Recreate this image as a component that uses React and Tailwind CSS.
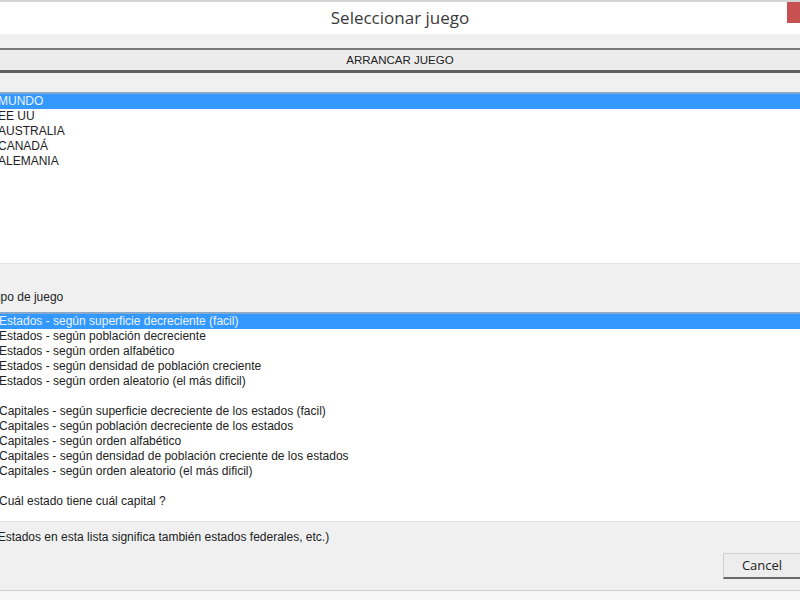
import React from "react";

const regions = ["MUNDO", "EE UU", "AUSTRALIA", "CANADÁ", "ALEMANIA"];

const games = [
  "Estados - según superficie decreciente (facil)",
  "Estados - según población decreciente",
  "Estados - según orden alfabético",
  "Estados - según densidad de población creciente",
  "Estados - según orden aleatorio (el más dificil)",
  "",
  "Capitales - según superficie decreciente de los estados (facil)",
  "Capitales - según población decreciente de los estados",
  "Capitales - según orden alfabético",
  "Capitales - según densidad de población creciente de los estados",
  "Capitales - según orden aleatorio (el más dificil)",
  "",
  "Cuál estado tiene cuál capital ?",
];

const ListRow = ({ text, selected, indent }) => (
  <div
    className={`h-[15px] leading-[15px] whitespace-nowrap ${indent} ${
      selected ? "bg-[#3399ff] text-[#eaf4ff]" : "text-[#222]"
    }`}
  >
    {text || "\u00a0"}
  </div>
);

const App = () => {
  return (
    <div className="w-[800px] h-[600px] overflow-hidden bg-[#f0f0f0] flex flex-col text-[12px] font-['Liberation_Sans',Arial,sans-serif]">
      {/* title bar */}
      <div className="h-[2px] bg-[#d4d4d4]" />
      <div className="h-[32px] bg-white flex items-center justify-center relative">
        <span className="text-[17px] text-[#3a3a3a] font-['Open_Sans',sans-serif] -mt-[1px]">
          Seleccionar juego
        </span>
        <div className="absolute right-0 top-0 w-[13px] h-[21px] bg-[#c75050]" />
      </div>
      <div className="h-[14px]" />

      {/* start button */}
      <div className="h-[25px] border-t-2 border-b-[3px] border-t-[#7a7a7a] border-b-[#5f5f5f] bg-[#ececec] flex items-center justify-center text-[#222] text-[11.5px] pt-[1px]">
        ARRANCAR JUEGO
      </div>
      <div className="h-[19px]" />

      {/* region list */}
      <div className="h-[171px] bg-white border-t-2 border-[#8aa9c8]">
        {regions.map((r, i) => (
          <ListRow key={r} text={r} selected={i === 0} indent="-ml-[2px]" />
        ))}
      </div>

      {/* game type */}
      <div className="h-[49px] border-t border-[#e3e3e3] flex items-end pb-[6px]">
        <span className="-ml-[9px] text-[#222]">Tipo de juego</span>
      </div>
      <div className="h-[209px] bg-white border-t-2 border-[#8aa9c8]">
        {games.map((g, i) => (
          <ListRow key={i} text={g} selected={i === 0} indent="-ml-[1px]" />
        ))}
      </div>

      {/* footer */}
      <div className="flex-1 flex flex-col border-t border-[#e3e3e3]">
        <div className="pt-[6px] -ml-[29px] text-[#222] whitespace-nowrap">
          (Los Estados en esta lista significa también estados federales, etc.)
        </div>
        <div className="flex justify-end mt-[7px]">
          <div className="w-[78px] h-[26px] -mr-[1px] bg-[#ededed] border border-[#d0d0d0] border-b-2 border-b-[#6a6a6a] flex items-center justify-center text-[13px] text-[#222] font-['Open_Sans',sans-serif]">
            Cancel
          </div>
        </div>
        <div className="mt-[11px] h-[1px] bg-[#cfcfcf]" />
        <div className="flex-1 bg-[#f7f7f7]" />
      </div>
    </div>
  );
};

export default App;
